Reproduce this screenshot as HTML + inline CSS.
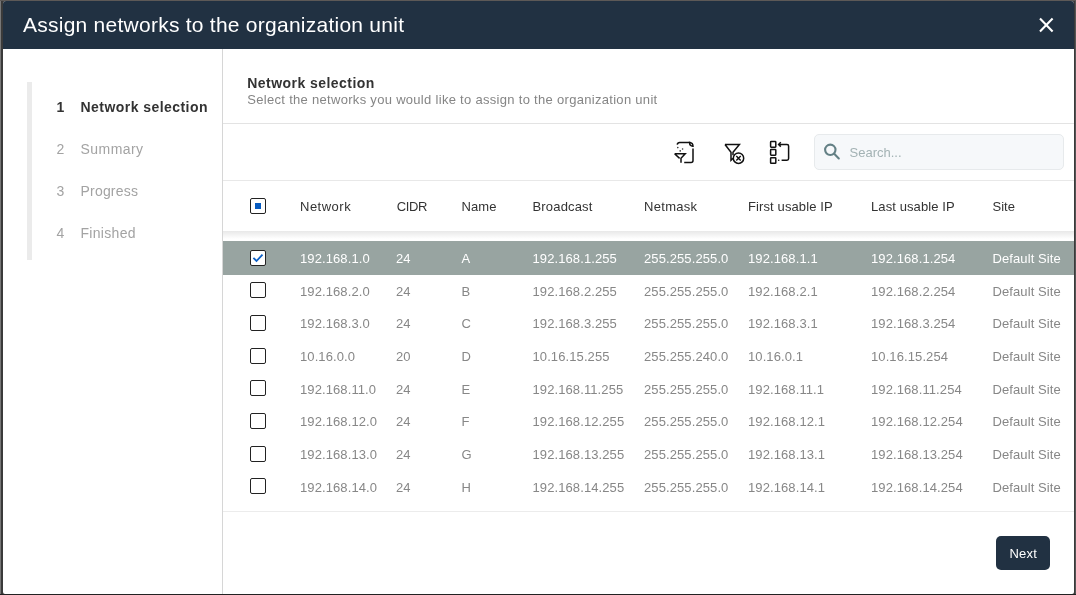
<!DOCTYPE html>
<html><head><meta charset="utf-8">
<style>
html,body{margin:0;padding:0;}
body{width:1076px;height:595px;overflow:hidden;position:relative;background:#3a3a3a;font-family:"Liberation Sans",sans-serif;}
.outer{position:absolute;left:0;top:0;width:1076px;height:595px;background:#3a3a3a;}
.dlg{position:absolute;left:3px;top:1px;width:1071px;height:593px;background:#fff;border-radius:3px 3px 2px 2px;overflow:hidden;}
.hdr{position:absolute;left:0;top:0;width:1071px;height:48px;background:#213142;}
.t{position:absolute;white-space:pre;line-height:1;-webkit-font-smoothing:antialiased;}
.layer{position:absolute;left:0;top:0;width:1076px;height:595px;will-change:transform;}
.cb{position:absolute;left:250px;width:14px;height:14px;border:1px solid #222;border-radius:2px;background:#fff;}
.cb svg{position:absolute;left:-1px;top:-1px;}
</style></head><body>
<div class="outer"></div><div style="position:absolute;left:0;top:0;width:1px;height:595px;background:#777"></div><div style="position:absolute;left:1075px;top:0;width:1px;height:595px;background:#555"></div><div style="position:absolute;left:0;top:0;width:1076px;height:1px;background:#5d5957"></div><div style="position:absolute;left:0;top:594px;width:1076px;height:1px;background:#222"></div>
<div class="dlg"></div>
<div class="hdr" style="left:3px;top:1px;border-radius:3px 3px 0 0;"></div>
<!-- close -->
<svg style="position:absolute;left:1038px;top:17px" width="16" height="16" viewBox="0 0 16 16">
<path d="M2 1.6 L14.6 14.6 M14.6 1.6 L2 14.6" stroke="#fff" stroke-width="2.1" fill="none"/></svg>
<!-- sidebar -->
<div style="position:absolute;left:222px;top:49px;width:1px;height:545px;background:#d6d6d6"></div>
<div style="position:absolute;left:27px;top:82px;width:5px;height:178px;background:#ebebeb"></div>
<!-- main separators -->
<div style="position:absolute;left:223px;top:123px;width:851px;height:1px;background:#e3e3e3"></div>
<div style="position:absolute;left:223px;top:180px;width:851px;height:1px;background:#e8e8e8"></div>
<!-- header shadow -->
<div style="position:absolute;left:223px;top:231px;width:851px;height:8px;background:linear-gradient(#e8e8e8,#ffffff)"></div>
<!-- selected row -->
<div style="position:absolute;left:223px;top:241px;width:851px;height:34px;background:#98a4a1"></div>
<!-- table bottom -->
<div style="position:absolute;left:223px;top:511px;width:851px;height:1px;background:#ececec"></div>
<!-- header checkbox -->
<div class="cb" style="top:198px"><div style="position:absolute;left:4px;top:4px;width:6px;height:6px;background:#075bc0"></div></div>
<!-- toolbar icons -->
<svg style="position:absolute;left:670px;top:138px" width="28" height="28" viewBox="670 138 28 28" fill="none" stroke="#111" stroke-width="1.5">
<path d="M677.2 144.6 Q677.6 142.4 679.6 142.4 L690.5 142.4"/>
<path d="M689.6 142.4 Q693 142.6 693 146.2 Q689.6 146.4 689.6 142.4 Z"/>
<path d="M693 148.5 L693 160.4 Q693 162.4 691 162.4 L684.2 162.4"/>
<path d="M674.6 153.8 L685.2 153.8 L681 158.2 L681 162.8 M674.6 153.8 L679.6 158.4"/>
<circle cx="677.8" cy="147.6" r="0.8" fill="#333" stroke="none"/>
<circle cx="682.6" cy="149" r="0.8" fill="#333" stroke="none"/>
<circle cx="680.2" cy="150.9" r="0.8" fill="#333" stroke="none"/>
</svg>
<svg style="position:absolute;left:718px;top:138px" width="30" height="30" viewBox="718 138 30 30" fill="none" stroke="#111" stroke-width="1.5">
<path d="M725 144.5 L739.4 144.5 L733 152.2 L733 155.2 M725 144.5 L731 152.2 L731 160.2 L733 158.4"/>
<circle cx="738.5" cy="158.2" r="5.2"/>
<path d="M736.3 156 L740.7 160.4 M740.7 156 L736.3 160.4" stroke-width="1.4"/>
</svg>
<svg style="position:absolute;left:766px;top:138px" width="28" height="30" viewBox="766 138 28 30" fill="none" stroke="#111" stroke-width="1.5">
<rect x="770.6" y="141.6" width="5.2" height="5.6" rx="0.6"/>
<rect x="770.6" y="149.6" width="5.2" height="5.6" rx="0.6"/>
<rect x="770.6" y="157.7" width="5.2" height="5.6" rx="0.6"/>
<path d="M778.8 144.4 L787 144.4 Q788.6 144.4 788.6 146 L788.6 158.6 Q788.6 160.3 787 160.3 L781.6 160.3"/>
<path d="M780.8 142.2 L778.6 144.4 L780.8 146.6"/>
<circle cx="778.7" cy="160.3" r="0.8" fill="#111" stroke="none"/>
</svg>
<!-- search -->
<div style="position:absolute;left:814px;top:134px;width:248px;height:34px;border:1px solid #e7eaec;border-radius:5px;background:#f6f8fa"></div>
<svg style="position:absolute;left:820px;top:140px" width="24" height="24" viewBox="820 140 24 24" fill="none" stroke="#648085" stroke-width="2.1">
<circle cx="830.3" cy="149.8" r="5.2"/>
<path d="M834.2 153.8 L838.8 158.4" stroke-linecap="round"/>
</svg>
<!-- next button -->
<div style="position:absolute;left:996px;top:536px;width:54px;height:34px;background:#213142;border-radius:5px"></div>
<div class="layer">
<div class="t" style="left:23px;top:14.32px;font-size:21px;color:#ffffff;font-weight:normal;letter-spacing:0.25px;">Assign networks to the organization unit</div>
<div class="t" style="left:56.5px;top:99.95px;font-size:14px;color:#333333;font-weight:bold;letter-spacing:0.0px;">1</div>
<div class="t" style="left:80.5px;top:99.95px;font-size:14px;color:#333333;font-weight:bold;letter-spacing:0.45px;">Network selection</div>
<div class="t" style="left:56.5px;top:142.15px;font-size:14px;color:#a3a3a3;font-weight:normal;letter-spacing:0.0px;">2</div>
<div class="t" style="left:80.5px;top:142.15px;font-size:14px;color:#a3a3a3;font-weight:normal;letter-spacing:0.45px;">Summary</div>
<div class="t" style="left:56.5px;top:184.15px;font-size:14px;color:#a3a3a3;font-weight:normal;letter-spacing:0.0px;">3</div>
<div class="t" style="left:80.5px;top:184.15px;font-size:14px;color:#a3a3a3;font-weight:normal;letter-spacing:0.2px;">Progress</div>
<div class="t" style="left:56.5px;top:226.45px;font-size:14px;color:#a3a3a3;font-weight:normal;letter-spacing:0.0px;">4</div>
<div class="t" style="left:80.5px;top:226.45px;font-size:14px;color:#a3a3a3;font-weight:normal;letter-spacing:0.3px;">Finished</div>
<div class="t" style="left:247.3px;top:75.95px;font-size:14px;color:#333333;font-weight:bold;letter-spacing:0.45px;">Network selection</div>
<div class="t" style="left:247.3px;top:92.80px;font-size:13px;color:#858585;font-weight:normal;letter-spacing:0.3px;">Select the networks you would like to assign to the organization unit</div>
<div class="t" style="left:300px;top:200.00px;font-size:13px;color:#333333;font-weight:normal;letter-spacing:0.5px;">Network</div>
<div class="t" style="left:396.8px;top:200.00px;font-size:13px;color:#333333;font-weight:normal;letter-spacing:-0.4px;">CIDR</div>
<div class="t" style="left:461.5px;top:200.00px;font-size:13px;color:#333333;font-weight:normal;letter-spacing:0.1px;">Name</div>
<div class="t" style="left:532.5px;top:200.00px;font-size:13px;color:#333333;font-weight:normal;letter-spacing:0.17px;">Broadcast</div>
<div class="t" style="left:644px;top:200.00px;font-size:13px;color:#333333;font-weight:normal;letter-spacing:0.3px;">Netmask</div>
<div class="t" style="left:748px;top:200.00px;font-size:13px;color:#333333;font-weight:normal;letter-spacing:0.11px;">First usable IP</div>
<div class="t" style="left:871px;top:200.00px;font-size:13px;color:#333333;font-weight:normal;letter-spacing:0.1px;">Last usable IP</div>
<div class="t" style="left:992.5px;top:200.00px;font-size:13px;color:#333333;font-weight:normal;letter-spacing:0.0px;">Site</div>
<div class="t" style="left:300px;top:251.80px;font-size:13px;color:#ffffff;font-weight:normal;letter-spacing:0.1px;">192.168.1.0</div>
<div class="t" style="left:396px;top:251.80px;font-size:13px;color:#ffffff;font-weight:normal;letter-spacing:0.1px;">24</div>
<div class="t" style="left:461.5px;top:251.80px;font-size:13px;color:#ffffff;font-weight:normal;letter-spacing:0.1px;">A</div>
<div class="t" style="left:532.5px;top:251.80px;font-size:13px;color:#ffffff;font-weight:normal;letter-spacing:0.1px;">192.168.1.255</div>
<div class="t" style="left:644px;top:251.80px;font-size:13px;color:#ffffff;font-weight:normal;letter-spacing:0.1px;">255.255.255.0</div>
<div class="t" style="left:748px;top:251.80px;font-size:13px;color:#ffffff;font-weight:normal;letter-spacing:0.1px;">192.168.1.1</div>
<div class="t" style="left:871px;top:251.80px;font-size:13px;color:#ffffff;font-weight:normal;letter-spacing:0.1px;">192.168.1.254</div>
<div class="t" style="left:992.5px;top:251.80px;font-size:13px;color:#ffffff;font-weight:normal;letter-spacing:0.1px;">Default Site</div>
<div class="cb" style="top:250.00px"><svg width="16" height="16" viewBox="0 0 16 16"><path d="M3.4 7.8 L6.5 11.0 L12.5 4.6" fill="none" stroke="#0b5fc6" stroke-width="1.8"/></svg></div>
<div class="t" style="left:300px;top:284.80px;font-size:13px;color:#878787;font-weight:normal;letter-spacing:0.1px;">192.168.2.0</div>
<div class="t" style="left:396px;top:284.80px;font-size:13px;color:#878787;font-weight:normal;letter-spacing:0.1px;">24</div>
<div class="t" style="left:461.5px;top:284.80px;font-size:13px;color:#878787;font-weight:normal;letter-spacing:0.1px;">B</div>
<div class="t" style="left:532.5px;top:284.80px;font-size:13px;color:#878787;font-weight:normal;letter-spacing:0.1px;">192.168.2.255</div>
<div class="t" style="left:644px;top:284.80px;font-size:13px;color:#878787;font-weight:normal;letter-spacing:0.1px;">255.255.255.0</div>
<div class="t" style="left:748px;top:284.80px;font-size:13px;color:#878787;font-weight:normal;letter-spacing:0.1px;">192.168.2.1</div>
<div class="t" style="left:871px;top:284.80px;font-size:13px;color:#878787;font-weight:normal;letter-spacing:0.1px;">192.168.2.254</div>
<div class="t" style="left:992.5px;top:284.80px;font-size:13px;color:#878787;font-weight:normal;letter-spacing:0.1px;">Default Site</div>
<div class="cb" style="top:282.30px"></div>
<div class="t" style="left:300px;top:317.45px;font-size:13px;color:#878787;font-weight:normal;letter-spacing:0.1px;">192.168.3.0</div>
<div class="t" style="left:396px;top:317.45px;font-size:13px;color:#878787;font-weight:normal;letter-spacing:0.1px;">24</div>
<div class="t" style="left:461.5px;top:317.45px;font-size:13px;color:#878787;font-weight:normal;letter-spacing:0.1px;">C</div>
<div class="t" style="left:532.5px;top:317.45px;font-size:13px;color:#878787;font-weight:normal;letter-spacing:0.1px;">192.168.3.255</div>
<div class="t" style="left:644px;top:317.45px;font-size:13px;color:#878787;font-weight:normal;letter-spacing:0.1px;">255.255.255.0</div>
<div class="t" style="left:748px;top:317.45px;font-size:13px;color:#878787;font-weight:normal;letter-spacing:0.1px;">192.168.3.1</div>
<div class="t" style="left:871px;top:317.45px;font-size:13px;color:#878787;font-weight:normal;letter-spacing:0.1px;">192.168.3.254</div>
<div class="t" style="left:992.5px;top:317.45px;font-size:13px;color:#878787;font-weight:normal;letter-spacing:0.1px;">Default Site</div>
<div class="cb" style="top:314.97px"></div>
<div class="t" style="left:300px;top:350.10px;font-size:13px;color:#878787;font-weight:normal;letter-spacing:0.1px;">10.16.0.0</div>
<div class="t" style="left:396px;top:350.10px;font-size:13px;color:#878787;font-weight:normal;letter-spacing:0.1px;">20</div>
<div class="t" style="left:461.5px;top:350.10px;font-size:13px;color:#878787;font-weight:normal;letter-spacing:0.1px;">D</div>
<div class="t" style="left:532.5px;top:350.10px;font-size:13px;color:#878787;font-weight:normal;letter-spacing:0.1px;">10.16.15.255</div>
<div class="t" style="left:644px;top:350.10px;font-size:13px;color:#878787;font-weight:normal;letter-spacing:0.1px;">255.255.240.0</div>
<div class="t" style="left:748px;top:350.10px;font-size:13px;color:#878787;font-weight:normal;letter-spacing:0.1px;">10.16.0.1</div>
<div class="t" style="left:871px;top:350.10px;font-size:13px;color:#878787;font-weight:normal;letter-spacing:0.1px;">10.16.15.254</div>
<div class="t" style="left:992.5px;top:350.10px;font-size:13px;color:#878787;font-weight:normal;letter-spacing:0.1px;">Default Site</div>
<div class="cb" style="top:347.64px"></div>
<div class="t" style="left:300px;top:382.75px;font-size:13px;color:#878787;font-weight:normal;letter-spacing:0.1px;">192.168.11.0</div>
<div class="t" style="left:396px;top:382.75px;font-size:13px;color:#878787;font-weight:normal;letter-spacing:0.1px;">24</div>
<div class="t" style="left:461.5px;top:382.75px;font-size:13px;color:#878787;font-weight:normal;letter-spacing:0.1px;">E</div>
<div class="t" style="left:532.5px;top:382.75px;font-size:13px;color:#878787;font-weight:normal;letter-spacing:0.1px;">192.168.11.255</div>
<div class="t" style="left:644px;top:382.75px;font-size:13px;color:#878787;font-weight:normal;letter-spacing:0.1px;">255.255.255.0</div>
<div class="t" style="left:748px;top:382.75px;font-size:13px;color:#878787;font-weight:normal;letter-spacing:0.1px;">192.168.11.1</div>
<div class="t" style="left:871px;top:382.75px;font-size:13px;color:#878787;font-weight:normal;letter-spacing:0.1px;">192.168.11.254</div>
<div class="t" style="left:992.5px;top:382.75px;font-size:13px;color:#878787;font-weight:normal;letter-spacing:0.1px;">Default Site</div>
<div class="cb" style="top:380.31px"></div>
<div class="t" style="left:300px;top:415.40px;font-size:13px;color:#878787;font-weight:normal;letter-spacing:0.1px;">192.168.12.0</div>
<div class="t" style="left:396px;top:415.40px;font-size:13px;color:#878787;font-weight:normal;letter-spacing:0.1px;">24</div>
<div class="t" style="left:461.5px;top:415.40px;font-size:13px;color:#878787;font-weight:normal;letter-spacing:0.1px;">F</div>
<div class="t" style="left:532.5px;top:415.40px;font-size:13px;color:#878787;font-weight:normal;letter-spacing:0.1px;">192.168.12.255</div>
<div class="t" style="left:644px;top:415.40px;font-size:13px;color:#878787;font-weight:normal;letter-spacing:0.1px;">255.255.255.0</div>
<div class="t" style="left:748px;top:415.40px;font-size:13px;color:#878787;font-weight:normal;letter-spacing:0.1px;">192.168.12.1</div>
<div class="t" style="left:871px;top:415.40px;font-size:13px;color:#878787;font-weight:normal;letter-spacing:0.1px;">192.168.12.254</div>
<div class="t" style="left:992.5px;top:415.40px;font-size:13px;color:#878787;font-weight:normal;letter-spacing:0.1px;">Default Site</div>
<div class="cb" style="top:412.98px"></div>
<div class="t" style="left:300px;top:448.05px;font-size:13px;color:#878787;font-weight:normal;letter-spacing:0.1px;">192.168.13.0</div>
<div class="t" style="left:396px;top:448.05px;font-size:13px;color:#878787;font-weight:normal;letter-spacing:0.1px;">24</div>
<div class="t" style="left:461.5px;top:448.05px;font-size:13px;color:#878787;font-weight:normal;letter-spacing:0.1px;">G</div>
<div class="t" style="left:532.5px;top:448.05px;font-size:13px;color:#878787;font-weight:normal;letter-spacing:0.1px;">192.168.13.255</div>
<div class="t" style="left:644px;top:448.05px;font-size:13px;color:#878787;font-weight:normal;letter-spacing:0.1px;">255.255.255.0</div>
<div class="t" style="left:748px;top:448.05px;font-size:13px;color:#878787;font-weight:normal;letter-spacing:0.1px;">192.168.13.1</div>
<div class="t" style="left:871px;top:448.05px;font-size:13px;color:#878787;font-weight:normal;letter-spacing:0.1px;">192.168.13.254</div>
<div class="t" style="left:992.5px;top:448.05px;font-size:13px;color:#878787;font-weight:normal;letter-spacing:0.1px;">Default Site</div>
<div class="cb" style="top:445.65px"></div>
<div class="t" style="left:300px;top:480.70px;font-size:13px;color:#878787;font-weight:normal;letter-spacing:0.1px;">192.168.14.0</div>
<div class="t" style="left:396px;top:480.70px;font-size:13px;color:#878787;font-weight:normal;letter-spacing:0.1px;">24</div>
<div class="t" style="left:461.5px;top:480.70px;font-size:13px;color:#878787;font-weight:normal;letter-spacing:0.1px;">H</div>
<div class="t" style="left:532.5px;top:480.70px;font-size:13px;color:#878787;font-weight:normal;letter-spacing:0.1px;">192.168.14.255</div>
<div class="t" style="left:644px;top:480.70px;font-size:13px;color:#878787;font-weight:normal;letter-spacing:0.1px;">255.255.255.0</div>
<div class="t" style="left:748px;top:480.70px;font-size:13px;color:#878787;font-weight:normal;letter-spacing:0.1px;">192.168.14.1</div>
<div class="t" style="left:871px;top:480.70px;font-size:13px;color:#878787;font-weight:normal;letter-spacing:0.1px;">192.168.14.254</div>
<div class="t" style="left:992.5px;top:480.70px;font-size:13px;color:#878787;font-weight:normal;letter-spacing:0.1px;">Default Site</div>
<div class="cb" style="top:478.32px"></div>
<div class="t" style="left:849.5px;top:146.00px;font-size:13px;color:#a3b2b4;font-weight:normal;letter-spacing:0.0px;">Search...</div>
<div class="t" style="left:1009.5px;top:547.00px;font-size:13px;color:#ffffff;font-weight:normal;letter-spacing:0.2px;">Next</div>
</div>
</body></html>
